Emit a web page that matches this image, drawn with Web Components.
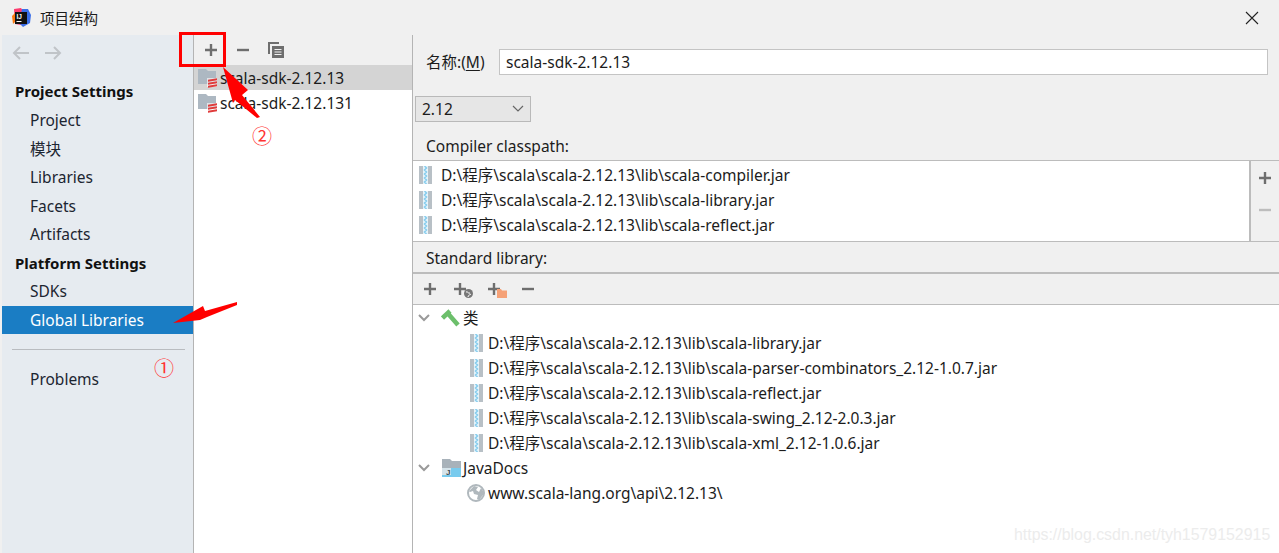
<!DOCTYPE html>
<html>
<head>
<meta charset="utf-8">
<style>
  html, body { margin: 0; height: 100%; overflow: hidden; }
  body {
    background: #fff;
    font: 15.5px "Noto Sans", "Noto Sans CJK SC", sans-serif;
    color: #1c1c1c;
  }
</style>
</head>
<body>
<template id="icons">
  <svg id="jar" width="13" height="18" viewBox="0 0 13 18"><rect width="13" height="18" fill="#b8c0c6"/><rect x="4" width="5" height="18" fill="#e8f4fa"/><path d="M5.500 0 7.500 2 5.500 4 7.500 6 5.500 8 7.500 10 5.500 12 7.500 14 5.500 16 7.500 18" stroke="#86cdee" stroke-width="1.500" fill="none"/></svg>
  <svg id="plus" width="14" height="14" viewBox="0 0 14 14"><path d="M1 7h12M7 1v12" stroke="#6e6e6e" stroke-width="2.400" fill="none"/></svg>
  <svg id="minus" width="14" height="14" viewBox="0 0 14 14"><path d="M1 7h12" stroke="#6e6e6e" stroke-width="2.400" fill="none"/></svg>
</template>
<ide-dialog>
  <ide-title-bar slot="title" label="项目结构"></ide-title-bar>
  <nav-panel slot="nav">
    <nav-heading>Project Settings</nav-heading>
    <nav-item>Project</nav-item>
    <nav-item>模块</nav-item>
    <nav-item>Libraries</nav-item>
    <nav-item>Facets</nav-item>
    <nav-item>Artifacts</nav-item>
    <nav-heading>Platform Settings</nav-heading>
    <nav-item>SDKs</nav-item>
    <nav-item selected>Global Libraries</nav-item>
    <nav-rule></nav-rule>
    <nav-item>Problems</nav-item>
  </nav-panel>
  <sdk-list slot="list">
    <sdk-row selected>scala-sdk-2.12.13</sdk-row>
    <sdk-row>scala-sdk-2.12.131</sdk-row>
  </sdk-list>
  <library-editor slot="editor">
    <class-row>D:\程序\scala\scala-2.12.13\lib\scala-compiler.jar</class-row>
    <class-row>D:\程序\scala\scala-2.12.13\lib\scala-library.jar</class-row>
    <class-row>D:\程序\scala\scala-2.12.13\lib\scala-reflect.jar</class-row>
    <tree-row slot="tree" kind="hammer">类</tree-row>
    <tree-row slot="tree" kind="jar">D:\程序\scala\scala-2.12.13\lib\scala-library.jar</tree-row>
    <tree-row slot="tree" kind="jar">D:\程序\scala\scala-2.12.13\lib\scala-parser-combinators_2.12-1.0.7.jar</tree-row>
    <tree-row slot="tree" kind="jar">D:\程序\scala\scala-2.12.13\lib\scala-reflect.jar</tree-row>
    <tree-row slot="tree" kind="jar">D:\程序\scala\scala-2.12.13\lib\scala-swing_2.12-2.0.3.jar</tree-row>
    <tree-row slot="tree" kind="jar">D:\程序\scala\scala-2.12.13\lib\scala-xml_2.12-1.0.6.jar</tree-row>
    <tree-row slot="tree" kind="docs">JavaDocs</tree-row>
    <tree-row slot="tree" kind="globe">www.scala-lang.org\api\2.12.13\</tree-row>
  </library-editor>
  <red-notes slot="notes"></red-notes>
</ide-dialog>

<script>
const icon = (id) => document.getElementById('icons').content.getElementById(id).outerHTML;

class IdeDialog extends HTMLElement {
    constructor() {
        super();
        this.attachShadow({ mode: 'open' });
        this.shadowRoot.innerHTML = `
      <style>
        :host { display: flex; flex-direction: column; position: relative; width: 1279px; height: 553px; overflow: hidden; background: #f0f0f0; }
        .body { flex: 1; display: flex; min-height: 0; padding-left: 2px; }
      </style>
      <slot name="title"></slot>
      <div class="body">
        <slot name="nav"></slot>
        <slot name="list"></slot>
        <slot name="editor"></slot>
      </div>
      <slot name="notes"></slot>
    `;
    }
}
customElements.define('ide-dialog', IdeDialog);

class IdeTitleBar extends HTMLElement {
    constructor() {
        super();
        this.attachShadow({ mode: 'open' });
        this.shadowRoot.innerHTML = `
      <style>
        :host { display: flex; align-items: center; height: 35px; flex: none; padding: 0 20px 0 11px; box-sizing: border-box; background: #f0f0f0; }
        .name { margin-left: 9px; flex: 1; font-size: 14.5px; }
        svg { display: block; }
      </style>
      <svg width="20" height="20" viewBox="0 0 20 20">
        <path d="M3 1 10 0l3 4-3 13-6-1z" fill="#fc3c6f"/>
        <path d="M11 1h6l3 6-1 8-7 4-4-4z" fill="#3b6fe8"/>
        <path d="M1 8l3-3v9l-2 2z" fill="#f97a12"/>
        <rect x="4" y="4" width="12" height="12" fill="#111"/>
        <text x="5.500" y="10.500" font-family="Liberation Sans" font-size="6.500" font-weight="bold" fill="#fff">IJ</text>
        <rect x="5.500" y="13" width="5" height="1" fill="#fff"/>
      </svg>
      <span class="name">${this.getAttribute('label')}</span>
      <svg width="14" height="14" viewBox="0 0 14 14"><path d="M1 1l12 12M13 1 1 13" stroke="#222" stroke-width="1.100" fill="none"/></svg>
    `;
    }
}
customElements.define('ide-title-bar', IdeTitleBar);

class NavPanel extends HTMLElement {
    constructor() {
        super();
        this.attachShadow({ mode: 'open' });
        this.shadowRoot.innerHTML = `
      <style>
        :host { display: block; flex: none; width: 191px; background: #e6ebf0; border-right: 1px solid #b4b4b4; }
        .arrows { display: flex; gap: 14px; height: 42px; padding: 9px 0 0 10px; box-sizing: border-box; }
        svg { display: block; }
      </style>
      <div class="arrows">
        <svg width="18" height="18" viewBox="0 0 18 18"><path d="M17 9H2M8 3 2 9l6 6" stroke="#c0c4c8" stroke-width="2" fill="none"/></svg>
        <svg width="18" height="18" viewBox="0 0 18 18"><path d="M1 9h15M10 3l6 6-6 6" stroke="#c0c4c8" stroke-width="2" fill="none"/></svg>
      </div>
      <slot></slot>
    `;
    }
}
customElements.define('nav-panel', NavPanel);

class NavHeading extends HTMLElement {
    constructor() {
        super();
        this.attachShadow({ mode: 'open' });
        this.shadowRoot.innerHTML = `
      <style>
        :host { display: flex; align-items: center; height: 28.6px; padding-left: 13px; font-weight: 700; font-size: 15px; color: #111; }
      </style>
      <slot></slot>
    `;
    }
}
customElements.define('nav-heading', NavHeading);

class NavItem extends HTMLElement {
    constructor() {
        super();
        this.attachShadow({ mode: 'open' });
        this.shadowRoot.innerHTML = `
      <style>
        :host { display: flex; align-items: center; height: 28.6px; padding-left: 28px; color: #1c2530; }
        :host([selected]) { background: #1a7dc4; color: #fff; }
      </style>
      <slot></slot>
    `;
    }
}
customElements.define('nav-item', NavItem);

class NavRule extends HTMLElement {
    constructor() {
        super();
        this.attachShadow({ mode: 'open' });
        this.shadowRoot.innerHTML = `
      <style>
        :host { display: block; height: 1px; margin: 14.5px 8px 14.5px 10px; background: #b9bcc0; }
      </style>
    `;
    }
}
customElements.define('nav-rule', NavRule);

class SdkList extends HTMLElement {
    constructor() {
        super();
        this.attachShadow({ mode: 'open' });
        this.shadowRoot.innerHTML = `
      <style>
        :host { display: block; flex: none; width: 218px; background: #fff; border-right: 1px solid #b4b4b4; }
        .tools { display: flex; align-items: center; gap: 18px; height: 30px; padding: 0 0 0 10px; background: #f0f0f0; }
        svg { display: block; }
      </style>
      <div class="tools">
        ${icon('plus')}${icon('minus')}
        <svg width="17" height="17" viewBox="0 0 17 17"><path d="M1 12V1h10" stroke="#6e6e6e" stroke-width="2" fill="none"/><rect x="4" y="4" width="12" height="12" fill="#6e6e6e"/><path d="M6.500 7.500h7M6.500 10h7M6.500 12.500h7" stroke="#f0f0f0" stroke-width="1.200"/></svg>
      </div>
      <slot></slot>
    `;
    }
}
customElements.define('sdk-list', SdkList);

class SdkRow extends HTMLElement {
    constructor() {
        super();
        this.attachShadow({ mode: 'open' });
        this.shadowRoot.innerHTML = `
      <style>
        :host { display: flex; align-items: center; gap: 3px; height: 25px; padding-left: 4px; background: #fff; }
        :host([selected]) { background: #d4d4d4; }
        svg { display: block; }
      </style>
      <svg width="19" height="20" viewBox="0 0 19 20">
        <path d="M0 1h8l2 2h8v13H0z" fill="#adb8c2"/>
        <path d="M9 10h10v9H9z" fill="#fff" opacity=".6"/>
        <path d="M10 11.800 19 10.300v2l-9 1.500zM10 14.800 19 13.300v2l-9 1.500zM10 17.800 19 16.300v2l-9 1.500z" fill="#e03b3b"/>
      </svg>
      <span><slot></slot></span>
    `;
    }
}
customElements.define('sdk-row', SdkRow);

class LibraryEditor extends HTMLElement {
    constructor() {
        super();
        this.attachShadow({ mode: 'open' });
        this.shadowRoot.innerHTML = `
      <style>
        :host { display: flex; flex-direction: column; flex: 1; min-width: 0; background: #f0f0f0; }
        svg { display: block; }
        .name { display: flex; align-items: center; height: 26px; margin: 14px 11px 0 13px; }
        .name label { width: 73px; flex: none; padding-bottom: 1px; }
        u { text-underline-offset: 2px; }
        .field { flex: 1; height: 26px; box-sizing: border-box; padding-left: 6px; line-height: 24px; background: #fff; border: 1px solid #c4c4c4; }
        .combo { display: flex; align-items: center; justify-content: space-between; box-sizing: border-box; width: 116px; height: 26px; margin: 21px 0 0 2px; padding: 0 6px 0 6px; background: #e6e6e6; border: 1px solid #b9b9b9; }
        .label { display: flex; align-items: center; box-sizing: border-box; padding-left: 13px; }
        .l1 { height: 38px; padding-top: 9px; }
        .l2 { height: 30px; padding-top: 2px; }
        .classes { display: flex; height: 80px; flex: none; border-top: 1px solid #bcbcbc; border-bottom: 1px solid #bcbcbc; }
        .rows { flex: 1; padding-top: 1px; background: #fff; border-right: 2px solid #bcbcbc; }
        .side { width: 28px; flex: none; display: flex; flex-direction: column; align-items: center; gap: 18px; padding-top: 10px; box-sizing: border-box; }
        .faint path { stroke: #bdbdbd; }
        .tools { display: flex; align-items: center; height: 30px; flex: none; gap: 14px; padding-left: 10px; border-top: 2px solid #bcbcbc; border-bottom: 1px solid #bcbcbc; }
        .combo-icon { display: flex; align-items: flex-end; }
        .combo-icon svg + svg { margin: 0 0 -2px -3px; }
        .globe-add { margin-left: 2px; }
        .folder-add svg + svg { margin-left: -4px; }
        .tree { flex: 1; background: #fff; }
      </style>
      <div class="name"><label>名称:(<u>M</u>)</label><div class="field">scala-sdk-2.12.13</div></div>
      <div class="combo">2.12
        <svg width="12" height="8" viewBox="0 0 12 8"><path d="M1 1l5 5 5-5" stroke="#666" stroke-width="1.200" fill="none"/></svg>
      </div>
      <div class="label l1">Compiler classpath:</div>
      <div class="classes">
        <div class="rows"><slot></slot></div>
        <div class="side">${icon('plus')}<span class="faint">${icon('minus')}</span></div>
      </div>
      <div class="label l2">Standard library:</div>
      <div class="tools">
        ${icon('plus')}
        <span class="combo-icon globe-add">${icon('plus')}<svg width="9" height="9" viewBox="0 0 9 9"><circle cx="4.500" cy="4.500" r="4.500" fill="#777"/><path d="M2 3c2-1 2 2 4 1M4 8c0-2 2-2 3-3" stroke="#fff" fill="none"/></svg></span>
        <span class="combo-icon folder-add">${icon('plus')}<svg width="10" height="9" viewBox="0 0 10 9"><path d="M0 0h4l1 1.500h5V9H0z" fill="#f5a177"/></svg></span>
        ${icon('minus')}
      </div>
      <div class="tree"><slot name="tree"></slot></div>
    `;
    }
}
customElements.define('library-editor', LibraryEditor);

class ClassRow extends HTMLElement {
    constructor() {
        super();
        this.attachShadow({ mode: 'open' });
        this.shadowRoot.innerHTML = `
      <style>
        :host { display: flex; align-items: center; gap: 9px; height: 25px; padding-left: 6px; }
        svg { display: block; }
      </style>
      ${icon('jar')}<span><slot></slot></span>
    `;
    }
}
customElements.define('class-row', ClassRow);

class TreeRow extends HTMLElement {
    constructor() {
        super();
        this.attachShadow({ mode: 'open' });
        const kind = this.getAttribute('kind');
        const chevron = `<svg width="12" height="8" viewBox="0 0 12 8"><path d="M1 1l5 5 5-5" stroke="#9a9a9a" stroke-width="2" fill="none"/></svg>`;
        const art = {
            hammer: `<svg width="20" height="18" viewBox="0 0 20 18"><path d="M1.500 9 9 2M6.500 4 17 16" stroke="#6cbf6b" stroke-width="4.500" fill="none"/></svg>`,
            jar: icon('jar'),
            docs: `<svg width="20" height="18" viewBox="0 0 20 18"><path d="M1 0h8l2 2h9v7H1z" fill="#a8b2ba"/><rect x="1" y="9" width="19" height="9" fill="#78cbee"/><rect x="1" y="9" width="9" height="7" fill="#d5e3ea"/><text x="5" y="16" font-family="Liberation Sans" font-size="8" font-weight="bold" fill="#3a4a55">J</text></svg>`,
            globe: `<svg width="18" height="18" viewBox="0 0 18 18"><circle cx="9" cy="9" r="8" fill="#fff" stroke="#b0b8bd" stroke-width="2"/><path d="M2 7l5-5 4 1-2 3 3 2 2-4 2 3v4l-4 5-2-1 1-4-4-1-1-3-3 1z" fill="#b0b8bd"/></svg>`
        }[kind];
        const parent = kind === 'hammer' || kind === 'docs';
        this.shadowRoot.innerHTML = `
      <style>
        :host { display: flex; align-items: center; height: 25px; }
        svg { display: block; flex: none; }
        .chev { width: 12px; margin: 0 11px 0 5px; flex: none; }
        .pad { padding-left: ${kind === 'jar' ? 57 : 54}px; }
        span { margin-left: ${kind === 'jar' ? 5 : parent ? 2 : 3}px; }
      </style>
      ${parent ? `<div class="chev">${chevron}</div>` : `<div class="pad"></div>`}
      ${art}<span><slot></slot></span>
    `;
    }
}
customElements.define('tree-row', TreeRow);

// red marks someone drew over the screenshot, plus the blog watermark
class RedNotes extends HTMLElement {
    constructor() {
        super();
        this.attachShadow({ mode: 'open' });
        this.shadowRoot.innerHTML = `
      <style>
        :host { display: block; position: absolute; inset: 0; pointer-events: none; }
        .box { position: absolute; left: 179px; top: 32px; width: 41px; height: 29px; border: 3px solid #f00; }
        svg { position: absolute; left: 0; top: 0; }
        .num { position: absolute; color: #f33; font: 20px "Noto Sans CJK SC", sans-serif; line-height: 20px; }
        .mark { position: absolute; left: 1014px; top: 526px; color: #ececec; font: 15.900px "Liberation Sans", sans-serif; white-space: nowrap; }
      </style>
      <div class="box"></div>
      <svg width="1279" height="553" viewBox="0 0 1279 553">
        <path d="M223 67 248 90 242 95 260 117 257 118 235 100 233 103z" fill="#f00"/>
        <path d="M173 323 203 306 205 311 237 302 237 305 207 317 200 320z" fill="#f00"/>
      </svg>
      <div class="num" style="left:154px;top:358px">①</div>
      <div class="num" style="left:252px;top:126px">②</div>
      <div class="mark">https://blog.csdn.net/tyh1579152915</div>
    `;
    }
}
customElements.define('red-notes', RedNotes);
</script>
</body>
</html>
